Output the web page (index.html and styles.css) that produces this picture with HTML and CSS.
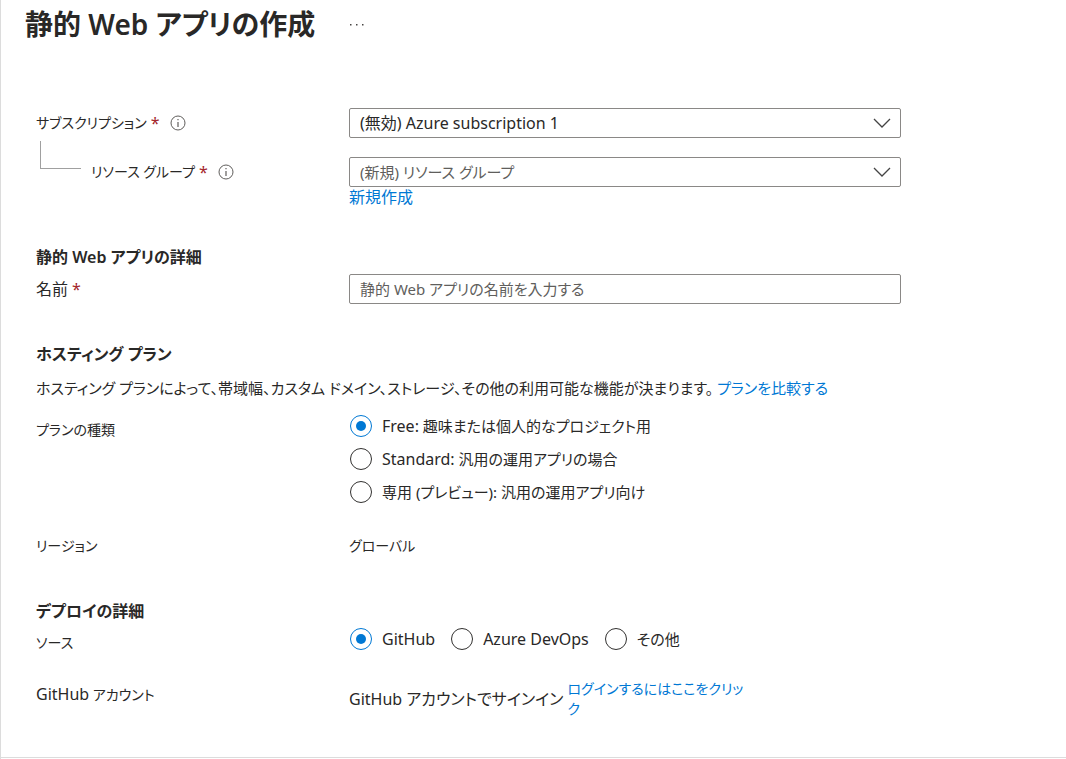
FILE: index.html
```html
<!DOCTYPE html>
<html lang="ja">
<head>
<meta charset="utf-8">
<meta name="viewport" content="width=device-width, initial-scale=1">
<title>静的 Web アプリの作成</title>
<link rel="stylesheet" href="styles.css">
</head>
<body>
<div class="blade">
  <header class="blade-header">
    <h1 class="blade-title">静的 Web アプリの作成</h1>
    <button class="more" type="button" aria-label="その他の操作">
      <svg width="16" height="4" viewBox="0 0 16 4"><g fill="#484644"><rect x="1" y="2" width="1.500" height="1.500"/><rect x="7" y="2" width="1.500" height="1.500"/><rect x="13" y="2" width="1.500" height="1.500"/></g></svg>
    </button>
  </header>
  <form class="form">
    <section class="section">
      <div class="row">
        <div class="label-cell">
          <label for="subscription">サブスクリプション</label><span class="required">*</span>
          <svg class="info" viewBox="0 0 16 16" aria-hidden="true"><circle cx="8" cy="8" r="7" fill="none" stroke="#605e5c"/><path d="M8 7v5M8 4v1.300" fill="none" stroke="#605e5c" stroke-width="1.200"/></svg>
        </div>
        <div class="field picker">
          <select class="control" id="subscription"><option>(無効) Azure subscription 1</option></select>
          <svg class="chevron" viewBox="0 0 18 10" aria-hidden="true"><path d="M1 1l8 8 8-8" fill="none" stroke="#444" stroke-width="1.300"/></svg>
        </div>
      </div>
      <div class="row child-row">
        <div class="label-cell">
          <span class="branch"></span>
          <label for="group">リソース グループ</label><span class="required">*</span>
          <svg class="info" viewBox="0 0 16 16" aria-hidden="true"><circle cx="8" cy="8" r="7" fill="none" stroke="#605e5c"/><path d="M8 7v5M8 4v1.300" fill="none" stroke="#605e5c" stroke-width="1.200"/></svg>
        </div>
        <div class="field picker">
          <select class="control muted" id="group"><option>(新規) リソース グループ</option></select>
          <svg class="chevron" viewBox="0 0 18 10" aria-hidden="true"><path d="M1 1l8 8 8-8" fill="none" stroke="#444" stroke-width="1.300"/></svg>
        </div>
      </div>
      <div class="row"><a class="link under-field" href="#">新規作成</a></div>
    </section>

    <section class="section">
      <h2 class="heading">静的 Web アプリの詳細</h2>
      <div class="row">
        <div class="label-cell"><label class="wide" for="name">名前</label><span class="required">*</span></div>
        <div class="field"><input class="control" id="name" type="text" placeholder="静的 Web アプリの名前を入力する"></div>
      </div>
    </section>

    <section class="section">
      <h2 class="heading">ホスティング プラン</h2>
      <p class="note">ホスティング プランによって、帯域幅、カスタム ドメイン、ストレージ、その他の利用可能な機能が決まります。 <a class="link" href="#">プランを比較する</a></p>
      <div class="row" role="radiogroup" aria-labelledby="plan-label">
        <div class="label-cell" id="plan-label">プランの種類</div>
        <div class="field plan-list">
          <label class="choice"><input class="radio" type="radio" name="plan" checked><span><span class="wide">Free:</span> 趣味または個人的なプロジェクト用</span></label>
          <label class="choice"><input class="radio" type="radio" name="plan"><span><span class="wide">Standard:</span> 汎用の運用アプリの場合</span></label>
          <label class="choice"><input class="radio" type="radio" name="plan"><span>専用 (プレビュー): 汎用の運用アプリ向け</span></label>
        </div>
      </div>
      <div class="row region-row">
        <div class="label-cell">リージョン</div>
        <div class="field region">グローバル</div>
      </div>
    </section>

    <section class="section">
      <h2 class="heading">デプロイの詳細</h2>
      <div class="row" role="radiogroup" aria-labelledby="source-label">
        <div class="label-cell" id="source-label">ソース</div>
        <div class="field source-list">
          <label class="choice"><input class="radio" type="radio" name="source" checked><span class="wide">GitHub</span></label>
          <label class="choice"><input class="radio" type="radio" name="source"><span class="wide">Azure DevOps</span></label>
          <label class="choice"><input class="radio" type="radio" name="source"><span>その他</span></label>
        </div>
      </div>
      <div class="row account-row">
        <div class="label-cell"><span><span class="wide">GitHub</span> アカウント</span></div>
        <div class="field account">
          <span class="wide">GitHub アカウントでサインイン</span>
          <a class="link account-link" href="#">ログインするにはここをクリック</a>
        </div>
      </div>
    </section>
  </form>
</div>
</body>
</html>
```
FILE: styles.css
```css
* {
  box-sizing: border-box;
}

body {
  margin: 0;
  background: #fff;
  color: #292827;
  font-family: "Noto Sans", "Noto Sans CJK JP", sans-serif;
  font-size: 15px;
  line-height: 20px;
  font-feature-settings: "palt";
}

.blade {
  min-height: 100vh;
  border-left: 1px solid #dcdcdc;
}

.blade-header {
  display: flex;
  align-items: center;
  gap: 30px;
  padding: 4px 24px 0;
}

.blade-title {
  margin: 0;
  font-size: 28px;
  line-height: 40px;
  font-weight: 600;
}

.more {
  display: flex;
  padding: 4px;
  border: 0;
  background: none;
}

.form {
  padding: 64px 24px 38px 35px;
  border-bottom: 1px solid #dcdcdc;
}

.section {
  margin-bottom: 36px;
}

.section:last-child {
  margin-bottom: 0;
}

.row {
  display: grid;
  grid-template-columns: 313px minmax(0, 552px);
  align-items: start;
}

.label-cell {
  display: flex;
  align-items: center;
  gap: 4px;
  min-height: 30px;
  font-size: 14px;
}

.wide {
  font-size: 16px;
}

.required {
  color: #a4262c;
  font-size: 16px;
}

.info {
  width: 16px;
  height: 16px;
  margin-left: 6px;
}

.child-row {
  margin-top: 19px;
}

.branch {
  align-self: flex-start;
  width: 41px;
  height: 28px;
  margin: -16px 6px 0 4px;
  border: solid #a0a0a0;
  border-width: 0 0 1px 1px;
}

.picker {
  position: relative;
}

.control {
  display: block;
  width: 100%;
  height: 30px;
  padding: 0 10px;
  border: 1px solid #8a8886;
  border-radius: 2px;
  background: #fff;
  color: inherit;
  font: inherit;
  font-size: 16px;
  font-feature-settings: inherit;
  appearance: none;
}

.muted,
.control::placeholder {
  color: #605e5c;
  font-size: 15px;
  opacity: 1;
}

.chevron {
  position: absolute;
  top: 10px;
  right: 10px;
  width: 18px;
  height: 10px;
  pointer-events: none;
}

.link {
  color: #0078d4;
  text-decoration: none;
}

.under-field {
  grid-column: 2;
  font-size: 16px;
}

.heading {
  margin: 0 0 3px;
  font-size: 16px;
  line-height: 28px;
  font-weight: 600;
}

.note {
  margin: 10px 0 17px;
}

.plan-list {
  display: grid;
  gap: 11px;
}

.source-list {
  display: flex;
  flex-wrap: wrap;
  gap: 15px;
}

.choice {
  display: flex;
  align-items: center;
  gap: 10px;
  min-height: 22px;
}

.radio {
  display: grid;
  place-content: center;
  width: 22px;
  height: 22px;
  margin: 0 0 0 1px;
  border: 1px solid #323130;
  border-radius: 50%;
  background: #fff;
  appearance: none;
}

.radio:checked {
  border-color: #0078d4;
}

.radio:checked::before {
  content: "";
  width: 10px;
  height: 10px;
  border-radius: 50%;
  background: #0078d4;
}

.region-row {
  align-items: center;
  margin-top: 28px;
}

.region {
  font-size: 14px;
}

.account-row {
  margin-top: 21px;
}

.account {
  display: flex;
  align-items: center;
  gap: 4px;
}

.account-link {
  max-width: 182px;
  font-size: 14px;
}
```
